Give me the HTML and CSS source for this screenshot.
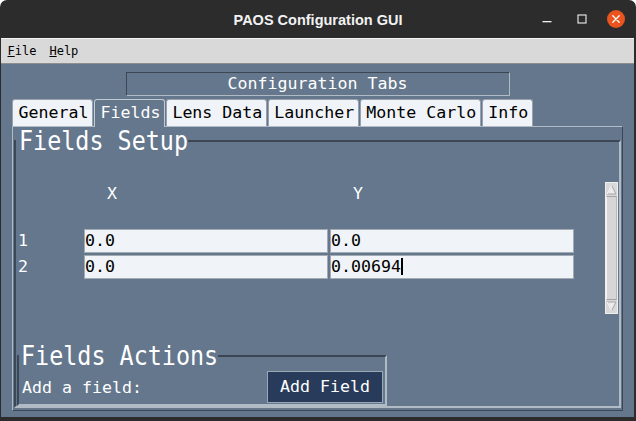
FILE: index.html
```html
<!DOCTYPE html>
<html>
<head>
<meta charset="utf-8">
<title>PAOS Configuration GUI</title>
<link rel="stylesheet" href="styles.css">
</head>
<body>
<div class="window">
  <header class="titlebar">
    <div class="tb-space"></div>
    <div class="title">PAOS Configuration GUI</div>
    <div class="controls">
      <svg class="ctl-min" width="10" height="10" viewBox="0 0 10 10"><rect x="0.5" y="6" width="9" height="1.3" fill="#f0f0f0"/></svg>
      <svg class="ctl-max" width="10" height="10" viewBox="0 0 10 10"><rect x="1" y="1" width="8" height="8" fill="none" stroke="#f0f0f0" stroke-width="1.1"/></svg>
      <svg class="ctl-close" width="18" height="18" viewBox="0 0 18 18"><circle cx="9" cy="9" r="9" fill="#e9541f"/><path d="M5.8 5.8 L12.2 12.2 M12.2 5.8 L5.8 12.2" stroke="#ffffff" stroke-width="1.3" stroke-linecap="round"/></svg>
    </div>
  </header>
  <nav class="menubar">
    <span class="menu"><u>F</u>ile</span>
    <span class="menu"><u>H</u>elp</span>
  </nav>
  <main class="client">
    <div class="caption">Configuration Tabs</div>
    <div class="tabbar">
      <div class="tab">General</div>
      <div class="tab active">Fields</div>
      <div class="tab">Lens Data</div>
      <div class="tab">Launcher</div>
      <div class="tab">Monte Carlo</div>
      <div class="tab">Info</div>
    </div>
    <section class="pane">
      <fieldset class="frame setup">
        <legend class="big"><span>Fields Setup</span></legend>
        <div class="setup-body">
          <div class="table">
            <div class="grid-row thead">
              <div></div>
              <div class="col">X</div>
              <div class="col">Y</div>
            </div>
            <div class="grid-row row">
              <div class="rownum">1</div>
              <div class="entry">0.0</div>
              <div class="entry">0.0</div>
            </div>
            <div class="grid-row row">
              <div class="rownum">2</div>
              <div class="entry">0.0</div>
              <div class="entry">0.00694<span class="caret"></span></div>
            </div>
          </div>
          <div class="scrollbar">
            <svg class="sb-arrow" width="11" height="13" viewBox="0 0 11 13"><path d="M5.5 2 L10 11 L1 11 Z" fill="#ececec" stroke="#a6a6a6" stroke-width="1"/><path d="M5.5 2 L1 11" stroke="#ffffff" stroke-width="1"/></svg>
            <div class="sb-thumb"></div>
            <svg class="sb-arrow" width="11" height="13" viewBox="0 0 11 13"><path d="M5.5 11 L10 2 L1 2 Z" fill="#ececec" stroke="#a6a6a6" stroke-width="1"/><path d="M1 2 L5.5 11" stroke="#ffffff" stroke-width="1"/></svg>
          </div>
        </div>
        <fieldset class="frame actions">
          <legend class="big"><span>Fields Actions</span></legend>
          <div class="actions-row">
            <span class="label">Add a field:</span>
            <button class="btn" type="button">Add Field</button>
          </div>
        </fieldset>
      </fieldset>
    </section>
  </main>
</div>
</body>
</html>
```
FILE: styles.css
```css
* { box-sizing: border-box; }
html, body { margin: 0; padding: 0; }
body {
  width: 636px;
  height: 421px;
  overflow: hidden;
  background: #ffffff;
  font-family: "DejaVu Sans Mono", "Liberation Mono", monospace;
}
.window {
  width: 636px;
  height: 421px;
  background: #2c2c2c;
  border-radius: 7px 7px 0 0;
  overflow: hidden;
}
.titlebar {
  height: 38px;
  display: grid;
  grid-template-columns: 1fr auto 1fr;
  align-items: center;
}
.title {
  font-family: "Liberation Sans", Arial, sans-serif;
  font-weight: bold;
  font-size: 14.5px;
  color: #f2f2f2;
  padding-top: 2px;
}
.controls {
  display: flex;
  justify-content: flex-end;
  align-items: center;
  padding-right: 11px;
}
.controls svg { display: block; }
.ctl-min { margin-top: 1px; }
.ctl-max { margin-left: 25px; }
.ctl-close { margin-left: 20px; }

.menubar {
  margin: 0 2px 0 1px;
  height: 26px;
  background: #d9d9d9;
  border-top: 1px solid #f6f6f6;
  border-bottom: 1px solid #8e8e8e;
  display: flex;
  align-items: center;
  font-size: 12px;
  color: #000000;
}
.menu { padding: 0 6.5px; }

.client {
  margin: 0 2px 0 1px;
  height: 353px;
  background: #64778d;
  padding-top: 8px;
  overflow: hidden;
  font-size: 16.6px;
  color: #ffffff;
}
.caption {
  width: 384px;
  height: 24px;
  margin: 0 auto;
  border: 1px solid;
  border-color: #3c4755 #b1bbc6 #b1bbc6 #3c4755;
  line-height: 22px;
  text-align: center;
}
.tabbar {
  display: flex;
  align-items: flex-end;
  gap: 1px;
  height: 27px;
  margin: 3px 11px 0;
  position: relative;
  z-index: 1;
}
.tab {
  height: 27px;
  padding: 0 3.5px 0 5.5px;
  border: 1px solid #98a2ae;
  border-bottom: none;
  border-radius: 3px 3px 0 0;
  background: #f0f3f7;
  color: #000000;
  line-height: 26px;
  white-space: nowrap;
}
.tab.active {
  background: #64778d;
  color: #ffffff;
  border-color: #c3cbd5;
  height: 28px;
  margin-bottom: -1px;
}
.pane {
  margin: 0 11px;
  height: 285px;
  border: 1px solid;
  border-color: #b1bbc6 #3c4755 #3c4755 #b1bbc6;
  padding: 0 1px;
}
.frame {
  margin: 0;
  padding: 0;
  min-width: 0;
  border: 2px solid;
  border-color: #3c4755 #b1bbc6 #b1bbc6 #3c4755;
}
.setup { margin-top: 1px; }
.big {
  padding: 0 0 0 3px;
  font-size: 23.4px;
  line-height: 26px;
  color: #ffffff;
}
.actions .big { padding-left: 2px; }
.big span {
  display: inline-block;
  transform: scaleY(1.17);
}
.setup-body {
  display: flex;
  align-items: flex-start;
  margin-top: 28px;
  padding: 0 1px 0 0;
}
.grid-row {
  display: grid;
  grid-template-columns: 66px 244px 244px;
  column-gap: 2px;
  height: 24px;
  align-items: center;
}
.thead { margin-bottom: 23px; }
.thead .col { padding-left: 23px; line-height: 24px; }
.row + .row { margin-top: 2px; }
.rownum { line-height: 24px; padding-left: 2px; }
.entry {
  height: 24px;
  background: #f0f3f7;
  border: 1px solid #a2aab4;
  color: #000000;
  line-height: 22px;
  white-space: nowrap;
  overflow: hidden;
}
.caret {
  display: inline-block;
  width: 2px;
  height: 17px;
  background: #000000;
  vertical-align: -3px;
}
.scrollbar {
  margin-left: auto;
  width: 13px;
  height: 132px;
  display: flex;
  flex-direction: column;
  background: #d9d9d9;
  border: 1px solid #eeeeee;
}
.sb-arrow { display: block; flex: none; }
.sb-thumb {
  flex: 1;
  border-top: 1px solid #a4a4a4;
  border-bottom: 1px solid #a4a4a4;
  border-left: 1px solid #f4f4f4;
  border-right: 1px solid #b8b8b8;
  background: #d6d6d6;
}
.actions {
  margin: 29px 0 0 1px;
  width: 370px;
}
.actions-row {
  display: flex;
  align-items: center;
  padding: 2px 2px 1px 3px;
}
.btn {
  margin-left: auto;
  height: 32px;
  padding: 0 12px;
  background: #283b5b;
  color: #ffffff;
  border: 1px solid #9aa8b8;
  font: inherit;
  line-height: 30px;
}
```
